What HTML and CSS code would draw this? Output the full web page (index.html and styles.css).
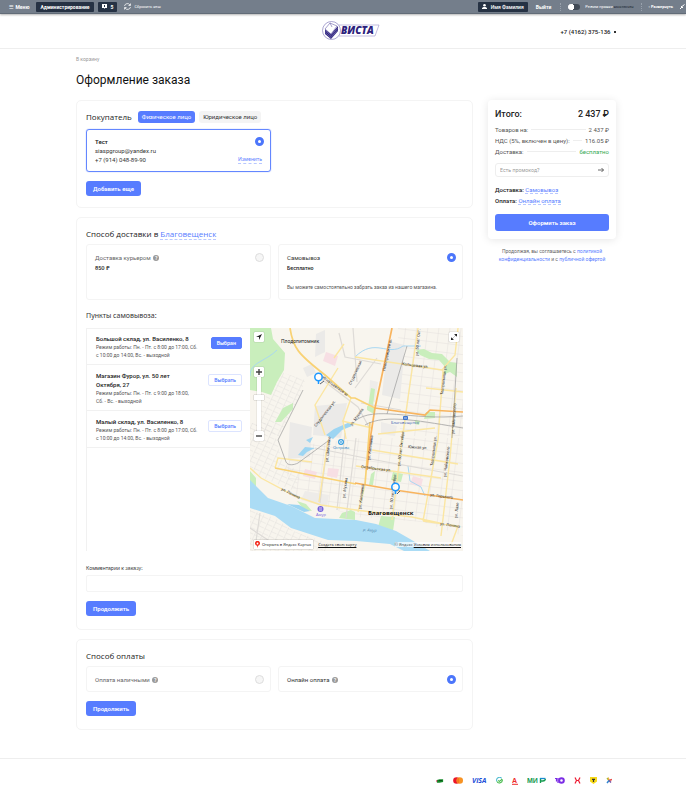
FILE: index.html
```html
<!doctype html>
<html lang="ru">
<head>
    <meta charset="UTF-8" />
    <meta name="viewport" content="width=device-width, initial-scale=1.0" />
    <title>Оформление заказа</title>
    <link rel="stylesheet" href="styles.css">
</head>
<body>
    <div class="admin-bar">
        <button type="button" class="admin-menu">☰&nbsp; Меню</button>
        <button type="button" class="admin-btn">Администрирование</button>
        <button type="button" class="admin-btn admin-count">
            <svg width="5" height="5" viewBox="0 0 5 5"><path d="M0 0h5v4H3L2.500 5 2 4H0z" fill="#fff"/><path d="M2.500 1v2" stroke="#263244"/></svg>
            5
        </button>
        <a href="#" class="admin-reset">
            <svg width="7" height="7" viewBox="0 0 14 14" fill="none" stroke="#fff" stroke-width="1.500"><path d="M1 6a6 6 0 0 1 11-2M13 1v4H9M13 8a6 6 0 0 1-11 2M1 13V9h4"/></svg>
            Сбросить кеш
        </a>
        <button type="button" class="admin-btn admin-user">
            <svg width="5" height="5" viewBox="0 0 5 5" fill="#fff"><circle cx="2.500" cy="1.300" r="1.300"/><path d="M0 5V4l1.500-1h2L5 4v1z"/></svg>
            Имя Фамилия
        </button>
        <a href="#" class="admin-exit">Выйти</a>
        <label class="admin-mode"><input type="checkbox" class="switch"><span>Режим правки <b>выключен</b></span></label>
        <a href="#" class="admin-expand">▫ Развернуть</a>
        <svg class="admin-pin" width="5" height="5" viewBox="0 0 5 5"><path d="M0 5l2-2M1 2l2 2M2 2.500L4.500.500" stroke="#fff" fill="none"/></svg>
    </div>

    <header class="header">
        <a href="#" class="logo" aria-label="Виста">
            <svg width="58" height="20" viewBox="0 0 58 20">
                <path d="M17 4h40l-4 11H17" fill="#fff" stroke="#9a92c9" stroke-width=".6"/>
                <circle cx="9.500" cy="9.500" r="9" fill="#fff" stroke="#8880bd" stroke-width=".7"/>
                <path d="M3 8l6 5 7-8v5l-7 8-6-5z" fill="#2c217c"/>
                <path d="M3 9.500l6 5 7-8M3 11.500l6 5 7-8" stroke="#b8b1df" stroke-width=".4" fill="none"/>
                <path d="M3 8l5-6 7 3-6 8zM8 2l2 4" stroke="#6c62ab" stroke-width=".6" fill="#fff"/>
                <text x="19" y="13" class="logo-text">ВИСТА</text>
            </svg>
        </a>
        <a href="tel:+74162375136" class="phone">+7 (4162) 375-136 <i></i></a>
    </header>

    <main class="container">
        <a href="#" class="back">В корзину</a>
        <h1>Оформление заказа</h1>

        <div class="checkout">
            <form class="steps" id="order">
                <section class="card buyer">
                    <div class="card-head">
                        <h2>Покупатель</h2>
                        <button type="button" class="pill active">Физическое лицо</button>
                        <button type="button" class="pill">Юридическое лицо</button>
                    </div>
                    <div class="tiles">
                        <div class="tile profile selected">
                            <label class="profile-info" for="profile"><b>Тест</b><br>siaspgroup@yandex.ru<br>+7 (914) 048-89-90</label>
                            <div class="profile-side">
                                <input type="radio" name="profile" id="profile" checked>
                                <a href="#" class="link">Изменить</a>
                            </div>
                        </div>
                    </div>
                    <button type="button" class="btn">Добавить еще</button>
                </section>

                <section class="card">
                    <h2>Способ доставки в <a href="#" class="link">Благовещенск</a></h2>
                    <div class="tiles delivery">
                        <label class="tile">
                            <span class="tile-row"><span class="muted">Доставка курьером <i class="help">?</i></span><input type="radio" name="delivery"></span>
                            <b class="price">850 ₽</b>
                        </label>
                        <label class="tile">
                            <span class="tile-row"><span>Самовывоз</span><input type="radio" name="delivery" checked></span>
                            <b class="price">Бесплатно</b>
                            <span class="note">Вы можете самостоятельно забрать заказ из нашего магазина.</span>
                        </label>
                    </div>

                    <h3>Пункты самовывоза:</h3>
                    <div class="pickup">
                        <ul class="points">
                            <li>
                                <div><h4>Большой склад, ул. Василенко, 8</h4><p>Режим работы: Пн. - Пт. с 8:00 до 17:00, Сб.<br>с 10:00 до 14:00, Вс. - выходной</p></div>
                                <button type="button" class="choose chosen">Выбран</button>
                            </li>
                            <li>
                                <div><h4>Магазин Фурор, ул. 50 лет<br>Октября, 27</h4><p>Режим работы: Пн. - Пт. с 9:00 до 18:00,<br>Сб. - Вс. - выходной</p></div>
                                <button type="button" class="choose">Выбрать</button>
                            </li>
                            <li>
                                <div><h4>Малый склад, ул. Василенко, 8</h4><p>Режим работы: Пн. - Пт. с 8:00 до 17:00, Сб.<br>с 10:00 до 14:00, Вс. - выходной</p></div>
                                <button type="button" class="choose">Выбрать</button>
                            </li>
                        </ul>
                        <div class="map">
                            <svg class="map-canvas" viewBox="0 0 213 223" preserveAspectRatio="xMidYMid slice">
                                <defs>
                                    <pattern id="blocks" width="11" height="9" patternUnits="userSpaceOnUse" patternTransform="rotate(7)"><path d="M0 0h11M0 0v9" stroke="#e2dfdc" stroke-width=".9"/></pattern>
                                    <pattern id="lanes" width="7" height="5" patternUnits="userSpaceOnUse" patternTransform="rotate(25)"><path d="M0 0h6M0 0v5" stroke="#dfddda" stroke-width=".8"/></pattern>
                                </defs>
                                <rect width="213" height="223" fill="#f8f5ee"/>
                                <!-- built-up areas -->
                                <path d="M25 42l30 10-6 18-20 38-26-2z" fill="url(#lanes)"/>
                                <path d="M0 95h22l10 38 20 12-8 18-30-13-14-10z" fill="url(#lanes)"/>
                                <path d="M148 0h65v108h-63z" fill="url(#blocks)"/>
                                <path d="M60 116l54-6h99v98l-40-14-68-5-60-22-12-30z" fill="url(#blocks)"/>
                                <path d="M0 182l25 8 18 13 35 12v8H0z" fill="url(#lanes)"/>
                                <path d="M138 13l17 4-5 54-18-4zM66 6l9-4v22l-10 5zM53 40l9-4 4 9-9 4zM65 78l32-3-6 35-28-3zM40 94l22 5-2 30-22 2z" fill="#ebeae8"/>
                                <path d="M55 163l24 4-2 12-26-7zM131 94l16 4-2 10-14-2zM120 52l8 2-3 20-6-2z" fill="#eeece9"/>
                                <path d="M76 24l12 4-3 10-12-5zM55 141l12 3-2 7-12-3zM78 140l11 1-2 9-10-2zM163 148l10 3-2 8-11-3z" fill="#f7dfe4"/>
                                <!-- parks -->
                                <path d="M0 0h21l2 11 12 14-1 17-7 12-6 13-9-3-12-2zM33 80l10-5v6L31 94h-6zM166 22l8-1 8 4 10 1 8 8 7 1v14l-7-5-8 3 4-7-7-8-10-1-9-4zM176 84h9v6l-11 1zM117 78l8 2-1 6-7-4zM121 60l4 1-2 17-5 1zM131 188l14 1-2 14-15-4zM121 146l4-3-2 14h-4zM47 173l9 3 6 7-8-1zM92 185l9-3 4 2v8l-16-2zM0 143l6 7v11l-6-4zM165 92l5 1-1 4-4-1zM143 144l10 2-2 8-10-2z" fill="#c9eebc"/>
                                <!-- water -->
                                <path d="M0 48C0 34 15 34 27 22M105 29c20-20 33 0 48-11h18M158 138l2 15 11 6 4 9" stroke="#a9d8f2" fill="none"/>
                                <path d="M0 152l18 18 23 8 24 12 41 2 20 4 20 7 14 8 20 12h-26l-14-7-34-3-28-1-37-12-16-12-25-8z" fill="#abdcf5"/>
                                <path d="M37 176l12 1 11 6-6 1zM76 107l8-6 16-7 2 4-10 4-9 9zM48 127l7-8 10 1-8 4-4 4zM56 112l7-3-3 6z" fill="#9dd5f2"/>
                                <!-- streets -->
                                <g stroke="#dedbd7" stroke-width="1.200" fill="none">
                                    <path d="M70 50l38 29 12 22M89 5l6 24 36 7M65 120l50 10 98 18M78 112l-8 63M95 105l-8 77M106 110l-10 80M105 60l22-30M111 75l40 7M0 200l30 20M10 185l-5 35M103 0l4 54"/>
                                </g>
                                <g stroke="#fbe6a2" stroke-width="1.400" fill="none">
                                    <path d="M88 40L65 77l10 30M84 30l10-14M101 70l-8 23 3 18M92 93l30 7M105 29l87 13 13-15 3-27M168 0l-16 112-10 80M193 42l-5 70-15 81M206 60l-6 70-9 78M0 140l11 10 34 18 26 9 35 5 56 7 46 10M25 140l3-10 34 4M78 112l-9 62M106 138l85 12M115 157l-7 27M122 122l86 14M176 60l37 4M128 106l57-6M173 193l35 5-7 19"/>
                                </g>
                                <path d="M40 0c3 20 8 26 35 47l26 23 4 0 20 10M25 140l40 8 41 8M120 94l-5 63" stroke="#f9d274" stroke-width="1.700" fill="none"/>
                                <path d="M142 0l-17 80-5 32-3 30M125 80l50 7 5-5 33 2M105 155l40 7 68 10" stroke="#f8b45e" stroke-width="1.700" fill="none"/>
                                <!-- railway -->
                                <path d="M53 62L28 112l8 22c2 4 8 3 12 1l30-22M157 18l-20 68M105 93c20-16 55 0 108-5M115 97c20-12 60-3 98 3M207 30l-5 80" stroke="#9b9b9b" stroke-width=".7" fill="none"/>

                                <g class="street-names">
                                    <text transform="translate(72 50) rotate(36)">Игнатьевское ш.</text>
                                    <text transform="translate(66 99) rotate(-52)">Студенческая ул.</text>
                                    <text transform="translate(101 57) rotate(-65)">Студенческая</text>
                                    <text transform="translate(102 98) rotate(-55)">ул. Мухина</text>
                                    <text transform="translate(135 43) rotate(-78)">Новотроицкое ш.</text>
                                    <text transform="translate(168 28) rotate(-85)">ул. 50 лет Окт.</text>
                                    <text transform="translate(152 37) rotate(7)">Кольцевая ул.</text>
                                    <text transform="translate(193 67) rotate(-83)">Театральная ул.</text>
                                    <text transform="translate(204 106) rotate(-86)">ул. Чайковского</text>
                                    <text transform="translate(78 134) rotate(-84)">ул. Шевченко</text>
                                    <text transform="translate(95 170) rotate(-83)">ул. Мухина</text>
                                    <text transform="translate(120 132) rotate(-83)">ул. Калинина</text>
                                    <text transform="translate(111 181) rotate(-83)">ул. Калинина</text>
                                    <text transform="translate(150 138) rotate(-83)">ул. 50 лет Октября</text>
                                    <text transform="translate(142 181) rotate(-83)">ул. 50 лет Октября</text>
                                    <text transform="translate(183 138) rotate(-83)">Театральная ул.</text>
                                    <text transform="translate(196 149) rotate(-83)">ул. Чайковского</text>
                                    <text transform="translate(207 190) rotate(-83)">ул. Лазо</text>
                                    <text transform="translate(111 140) rotate(7)">Октябрьская ул.</text>
                                    <text transform="translate(158 120) rotate(4)">Южная ул.</text>
                                    <text transform="translate(180 168) rotate(7)">ул. Горького</text>
                                    <text transform="translate(31 162) rotate(26)">ул. Ленина</text>
                                    <text transform="translate(190 197) rotate(8)">ул. Ленина</text>
                                </g>
                                <text x="31" y="14.500" class="place">Плодопитомник</text>
                                <text x="118" y="187" class="city">Благовещенск</text>
                                <text x="141" y="96" class="poi">Благовещенск</text>
                                <rect x="153" y="88" width="5" height="4" rx="1" fill="#3f76ce"/><path d="M154 90h3" stroke="#fff" stroke-width=".7"/>
                                <text x="83" y="121" class="poi water">Острова</text>
                                <circle cx="91" cy="114" r="3" fill="#379fe0"/><circle cx="91" cy="114" r="1.400" fill="none" stroke="#fff" stroke-width=".8"/>
                                <text x="66" y="188" class="poi violet">Амур</text>
                                <circle cx="70.500" cy="181" r="3" fill="#7662dc"/><path d="M69 180h3M69 182h3" stroke="#fff" stroke-width=".7"/>
                                <text x="113" y="203" class="river" transform="rotate(4 113 203)">р. Амур</text>
                                <g fill="#fff" fill-opacity=".9" stroke="#1e98ff" stroke-width="1.500">
                                    <path d="M68.500 56v-3M145.500 166v-3.500"/><circle cx="68.500" cy="49" r="3.700"/><circle cx="145.500" cy="159" r="3.700"/>
                                </g>
                                <path d="M70 56l4-3M147 166l3-3" stroke="#56606d"/>
                            </svg>
                            <button type="button" class="map-btn locate" aria-label="Моё местоположение"><svg width="6" height="6" viewBox="0 0 6 6"><path d="M0 3l6-3-3 6V3z" fill="#222"/></svg></button>
                            <button type="button" class="map-btn full" aria-label="На весь экран"><svg width="6" height="6" viewBox="0 0 6 6"><path d="M3.500 0H6v2.500zM0 3.500V6h2.500zM1 5l1.500-1.500M5 1L3.500 2.500" fill="#222" stroke="#222" stroke-width=".5"/></svg></button>
                            <div class="zoom">
                                <button type="button" class="map-btn" aria-label="Приблизить"><svg width="6" height="6" viewBox="0 0 6 6"><path d="M0 3h6M3 0v6" stroke="#444" stroke-width="1.400"/></svg></button>
                                <span class="zoom-track"><i></i></span>
                                <button type="button" class="map-btn" aria-label="Отдалить"><svg width="6" height="6" viewBox="0 0 6 6"><path d="M0 3h6" stroke="#444" stroke-width="1.400"/></svg></button>
                            </div>
                            <div class="map-foot">
                                <a href="#" class="open-map"><svg width="5" height="7" viewBox="0 0 5 7"><path d="M2.500 7L2 4.800A2.500 2.500 0 1 1 3 4.800z" fill="#f32a1b"/><circle cx="2.500" cy="2.500" r=".9" fill="#fff"/></svg>Открыть в Яндекс Картах</a>
                                <a href="#" class="own-map">Создать свою карту</a>
                                <span class="terms">© Яндекс <a href="#">Условия использования</a></span>
                            </div>
                        </div>
                    </div>

                    <label class="comment-label" for="comment">Комментарии к заказу:</label>
                    <input type="text" class="comment" id="comment">
                    <button type="button" class="btn">Продолжить</button>
                </section>

                <section class="card">
                    <h2>Способ оплаты</h2>
                    <div class="tiles">
                        <label class="tile">
                            <span class="tile-row"><span class="muted">Оплата наличными <i class="help">?</i></span><input type="radio" name="payment"></span>
                        </label>
                        <label class="tile">
                            <span class="tile-row"><span>Онлайн оплата <i class="help">?</i></span><input type="radio" name="payment" checked></span>
                        </label>
                    </div>
                    <button type="button" class="btn">Продолжить</button>
                </section>
            </form>

            <aside class="sidebar">
                <div class="summary">
                    <div class="total"><span>Итого:</span><span>2 437 ₽</span></div>
                    <div class="sum-row"><span>Товаров на:</span><i></i><span>2 437 ₽</span></div>
                    <div class="sum-row"><span>НДС (5%, включен в цену):</span><i></i><span>116.05 ₽</span></div>
                    <div class="sum-row"><span>Доставка:</span><i></i><span class="free">бесплатно</span></div>
                    <div class="promo">
                        <input type="text" placeholder="Есть промокод?" aria-label="Промокод">
                        <button type="button" aria-label="Применить"><svg width="6" height="6" viewBox="0 0 6 6"><path d="M0 3h5.500M3.500 1l2 2-2 2" fill="none" stroke="#444" stroke-width=".8"/></svg></button>
                    </div>
                    <p class="choice">Доставка: <a href="#" class="link">Самовывоз</a></p>
                    <p class="choice">Оплата: <a href="#" class="link">Онлайн оплата</a></p>
                    <button type="submit" form="order" class="btn submit">Оформить заказ</button>
                </div>
                <p class="agree">Продолжая, вы соглашаетесь с <a href="#">политикой конфиденциальности</a> и с <a href="#">публичной офертой</a></p>
            </aside>
        </div>
    </main>

    <footer class="footer">
        <svg width="8" height="6" viewBox="0 0 9 6"><path d="M1 2l3-1 4 0 0 3-4 1-3 0z" fill="#168a2b"/><path d="M3 2.500h4" stroke="#064e12"/><path d="M0 3h1.500" stroke="#e04"/></svg>
        <svg width="10" height="7" viewBox="0 0 10 7"><circle cx="3.500" cy="3.500" r="3.300" fill="#eb1528"/><circle cx="6.700" cy="3.500" r="3.300" fill="#f79324"/><path d="M5.100 1v5" stroke="#f75f1c"/></svg>
        <svg width="15" height="7" viewBox="0 0 15 7"><text x="0" y="6" class="visa">VISA</text></svg>
        <svg width="7" height="7" viewBox="0 0 8 8" fill="none"><path d="M6.500 1.500A3.300 3.300 0 0 0 1 5" stroke="#4cbbcf" stroke-width="1.200"/><path d="M1 5a3.300 3.300 0 0 0 6.200-2M2.500 4L4 5l3-2.500" stroke="#41b847" stroke-width="1.200"/></svg>
        <svg width="6" height="8" viewBox="0 0 6 8"><text x="0" y="5.500" class="alfa">А</text><path d="M0 7.300h6" stroke="#ee2b2b"/></svg>
        <svg width="19" height="7" viewBox="0 0 19 7"><text x="0" y="6" class="mir">МИ</text><path d="M13.500 1v5M13.500 4H16q2 0 2.500-2" stroke="#169b50" stroke-width="1.400" fill="none"/><path d="M13 1.500h5.500" stroke="#198ccd" stroke-width="1.300"/></svg>
        <svg width="10" height="7" viewBox="0 0 10 7"><circle cx="6.500" cy="3.500" r="2.300" fill="none" stroke="#7b2ce5" stroke-width="2"/><path d="M0 1.500h1.500v3M3 1v5" stroke="#7b2ce5" stroke-width="1.200" fill="none"/></svg>
        <svg width="7" height="7" viewBox="0 0 7 7"><path d="M1 .500l1.500 3L1 6.500M6 .500l-1.500 3L6 6.500M2 3.500h3" stroke="#ed1c33" stroke-width="1.200" fill="none"/></svg>
        <svg width="7" height="7" viewBox="0 0 7 7"><path d="M0 0h7v4.500L3.500 7 0 4.500z" fill="#f7d918"/><path d="M2 2.300h3M3.500 2.500V5" stroke="#333" stroke-width="1.200"/></svg>
        <svg width="6" height="7" viewBox="0 0 6 7"><path d="M3 3.500L1 1" stroke="#a4b934" stroke-width="1.300"/><path d="M3 3.500L2.500.500" stroke="#f2a32c"/><path d="M3 3.500l3-1" stroke="#e64a46" stroke-width="1.500"/><path d="M3 3.500l2 2" stroke="#7951a2" stroke-width="1.500"/><path d="M3 3.500L1 6" stroke="#3184d0" stroke-width="1.500"/></svg>
    </footer>
</body>
</html>
```
FILE: styles.css
```css
* {
    box-sizing: border-box;
    margin: 0;
    padding: 0;
}

body {
    font-family: Roboto, Inter, sans-serif;
    font-size: 6px;
    line-height: 9px;
    color: #333;
    background: #fff;
}

svg {
    display: block;
    flex: none;
}

a {
    color: #577cff;
    text-decoration: none;
}

button {
    font-family: inherit;
    font-size: 6px;
    line-height: 8px;
    border: none;
    cursor: pointer;
}

.admin-bar {
    display: flex;
    align-items: center;
    height: 14px;
    padding: 0 1px 0 9px;
    font-size: 5px;
    line-height: 8px;
    color: #fff;
    background: #747e8b;
    border-bottom: 1px solid #626c78;
    box-shadow: 0 1px 2px rgba(0, 0, 0, 0.3);
    white-space: nowrap;
}

.admin-bar a,
.admin-bar button {
    font-size: 5px;
    color: #fff;
}

.admin-menu {
    background: none;
    font-weight: bold;
    margin-right: 7px;
}

.admin-btn {
    display: flex;
    align-items: center;
    gap: 4px;
    height: 10px;
    padding: 0 4px;
    border-radius: 1px;
    background: #263244;
    font-weight: bold;
}

.admin-bar .admin-user,
.admin-bar .admin-exit,
.admin-bar .admin-expand {
    font-size: 4px;
    font-weight: bold;
}

.admin-bar .admin-user {
    margin-left: auto;
    font-size: 5px;
    font-weight: 500;
}

.admin-count {
    margin: 0 7px 0 4px;
}

.admin-bar .admin-reset {
    display: flex;
    align-items: center;
    gap: 3px;
    font-size: 4px;
}

.admin-bar .admin-exit {
    margin: 0 9px 0 8px;
    font-size: 5px;
}

.admin-mode {
    display: flex;
    align-items: center;
    gap: 5px;
    padding: 0 7px;
    font-size: 4px;
    border-left: 1px dotted #98a1ac;
    border-right: 1px dotted #98a1ac;
}

.admin-mode b {
    font-weight: 500;
    color: #333c48;
}

.switch {
    appearance: none;
    width: 12px;
    height: 6px;
    border-radius: 3px;
    background: radial-gradient(circle at 3px 3px, #fff 3px, #414a56 3px);
}

.admin-bar .admin-expand {
    margin: 0 7px;
}

.header {
    display: grid;
    grid-template-columns: 1fr auto 1fr;
    align-items: center;
    height: 35px;
    padding: 0 70px 0 86px;
    border-bottom: 1px solid #eee;
}

.logo {
    grid-column: 2;
}

.logo-text {
    font: italic 800 10px "Open Sans", sans-serif;
    fill: #2c217c;
}

.phone {
    justify-self: end;
    color: #222;
    font-weight: 500;
}

.phone i {
    display: inline-block;
    width: 2px;
    height: 2px;
    margin: 0 0 1px 2px;
    background: #333;
}

.container {
    padding: 6px 70px 0 76px;
}

.back {
    display: block;
    font-size: 5px;
    color: #999;
}

h1 {
    margin: 6px 0 10px;
    font-size: 12px;
    line-height: 20px;
    font-weight: 400;
    color: #111;
}

.checkout {
    display: grid;
    grid-template-columns: minmax(0, 1fr) 128px;
    gap: 15px;
    align-items: start;
}

.steps {
    display: flex;
    flex-direction: column;
    gap: 9px;
}

.card {
    padding: 10px 9px 13px;
    border: 1px solid #f4f4f4;
    border-radius: 5px;
}

.buyer {
    padding-bottom: 11px;
}

.card-head {
    display: flex;
    align-items: center;
    gap: 4px;
}

h2,
h3 {
    font-family: "Open Sans", sans-serif;
    font-size: 8px;
    line-height: 12px;
    font-weight: 400;
    color: #222;
}

h3 {
    margin: 10px 0 6px;
    font-family: "Noto Sans", sans-serif;
    font-size: 7px;
    color: #333;
}

.card-head h2 {
    margin-right: 2px;
}

.pill {
    height: 12px;
    padding: 0 4px;
    border-radius: 3px;
    background: #f4f4f4;
    color: #333;
}

.pill.active {
    background: #577cff;
    color: #fff;
}

.tiles {
    display: grid;
    grid-template-columns: 1fr 1fr;
    gap: 7px;
    margin: 6px 0 9px;
}

.card > h2 + .tiles {
    margin: 4px 0 9px;
}

.tile {
    display: block;
    padding: 7px 6px 7px 8px;
    border: 1px solid #f4f4f4;
    border-radius: 3px;
}

.tile-row {
    display: flex;
    justify-content: space-between;
    align-items: center;
    height: 10px;
}

.profile {
    display: flex;
    justify-content: space-between;
}

.tile.selected {
    border-color: #6487ff;
    box-shadow: 0 0 1px #6487ff;
}

.tile b {
    font-weight: 600;
    color: #222;
}

.profile-side {
    display: flex;
    flex-direction: column;
    align-items: flex-end;
    justify-content: space-between;
}

.profile-side .link {
    font: 5px/7px Inter, sans-serif;
    margin-right: 2px;
}

.link {
    border-bottom: 1px dashed #b9c8ff;
}

input[type="radio"] {
    appearance: none;
    width: 9px;
    height: 9px;
    border: 1px solid #ddd;
    border-radius: 50%;
    background: #f6f6f6;
}

input[type="radio"]:checked {
    border: 3px solid #4c76fb;
    background: #fff;
}

.delivery .tile {
    min-height: 56px;
}

.muted {
    color: #666;
}

.help {
    display: inline-block;
    width: 6px;
    height: 6px;
    margin-left: 1px;
    border-radius: 50%;
    background: #999;
    color: #fff;
    font-size: 5px;
    line-height: 6px;
    font-style: normal;
    font-weight: 600;
    text-align: center;
}

.price {
    display: block;
    margin-top: 2px;
    font-family: Inter, sans-serif;
    font-size: 5px;
}

.note {
    display: block;
    margin-top: 10px;
    font-size: 5px;
    color: #555;
}

.pickup {
    display: grid;
    grid-template-columns: 163px minmax(0, 1fr);
    border-left: 1px solid #f1f1f1;
}

.points {
    list-style: none;
    border-top: 1px solid #f1f1f1;
}

.points li {
    display: flex;
    justify-content: space-between;
    gap: 4px;
    padding: 5px 8px 5px 9px;
    border-bottom: 1px solid #f1f1f1;
    white-space: nowrap;
}

.points li + li {
    padding-top: 6px;
}

.points h4 {
    font-size: 6px;
    line-height: 9px;
    font-weight: 500;
    color: #222;
}

.points p {
    font-size: 5px;
    line-height: 8px;
    color: #555;
}

.choose {
    flex: none;
    align-self: flex-start;
    height: 12px;
    margin-top: 3px;
    padding: 0 5px;
    border: 1px solid #dce4ff;
    border-radius: 2px;
    background: #fff;
    color: #577cff;
    font-family: Inter, sans-serif;
    font-size: 5px;
    font-weight: 600;
}

.chosen {
    background: #577cff;
    border-color: #577cff;
    color: #fff;
}

.map {
    position: relative;
    height: 223px;
    overflow: hidden;
}

.map-canvas {
    width: 100%;
    height: 100%;
}

.street-names {
    font: 4px Roboto, sans-serif;
    fill: #333;
}

.place {
    font: 5px Roboto, sans-serif;
    fill: #222;
}

.city {
    font: 700 6px "Open Sans", sans-serif;
    fill: #111;
}

.poi {
    font: 4px "Open Sans", sans-serif;
    fill: #3157ae;
}

.water {
    fill: #2786c8;
}

.violet {
    fill: #7662dc;
}

.river {
    font: italic 4px "Open Sans", sans-serif;
    fill: #4c82aa;
}

.map-btn {
    display: flex;
    align-items: center;
    justify-content: center;
    width: 10px;
    height: 10px;
    border-radius: 1px;
    background: #fff;
    box-shadow: 0 0 1px rgba(0, 0, 0, 0.5);
}

.locate {
    position: absolute;
    left: 4px;
    top: 4px;
}

.full {
    position: absolute;
    right: 4px;
    top: 4px;
}

.zoom {
    position: absolute;
    left: 4px;
    top: 39px;
}

.zoom-track {
    display: block;
    width: 4px;
    height: 54px;
    margin: 0 auto;
    padding-top: 18px;
    background: #fff;
    box-shadow: 0 0 1px rgba(0, 0, 0, 0.5);
}

.zoom-track i {
    display: block;
    width: 10px;
    height: 5px;
    margin-left: -3px;
    background: #fff;
    box-shadow: 0 0 1px rgba(0, 0, 0, 0.5);
}

.map-foot {
    position: absolute;
    left: 4px;
    right: 2px;
    bottom: 2px;
    display: flex;
    align-items: center;
    font: 4px/9px "Open Sans", sans-serif;
    white-space: nowrap;
}

.map-foot a {
    color: #111;
    text-decoration: underline;
}

.map-foot .open-map {
    display: flex;
    align-items: center;
    gap: 2px;
    padding: 0 2px 0 1px;
    background: #fff;
    text-decoration: none;
    box-shadow: 0 0 1px rgba(0, 0, 0, 0.5);
}

.own-map {
    margin-left: 5px;
}

.terms {
    margin-left: auto;
    line-height: 5px;
    background: rgba(255, 255, 255, 0.7);
}

.comment-label {
    display: block;
    margin-top: 13px;
    font-family: Inter, sans-serif;
    font-size: 5px;
}

.comment {
    display: block;
    width: 100%;
    height: 17px;
    margin: 2px 0 9px;
    padding: 0 6px;
    border: 1px solid #f4f4f4;
    border-radius: 2px;
    font: inherit;
}

.btn {
    height: 15px;
    padding: 0 7px;
    border-radius: 3px;
    background: #577cff;
    color: #fff;
    font-weight: 600;
}

.summary {
    padding: 8px 7px;
    border-radius: 4px;
    box-shadow: 0 1px 8px rgba(0, 0, 0, 0.1);
}

.total {
    display: flex;
    justify-content: space-between;
    margin-bottom: 3px;
    font-size: 9px;
    line-height: 13px;
    font-weight: 500;
    color: #222;
}

.sum-row {
    display: flex;
    align-items: center;
    gap: 3px;
    line-height: 11px;
    color: #555;
}

.sum-row i {
    flex: 1;
    height: 1px;
    background: #eee;
}

.free {
    color: #35a955;
}

.promo {
    display: flex;
    align-items: center;
    height: 14px;
    margin: 6px 0 7px;
    padding: 0 4px;
    border: 1px solid #eee;
    border-radius: 3px;
}

.promo input {
    flex: 1;
    min-width: 0;
    border: none;
    font: 5px/9px Inter, sans-serif;
}

.promo input::placeholder {
    color: #999;
}

.promo button {
    background: none;
}

.choice {
    line-height: 11px;
    font-weight: 500;
    color: #222;
}

.choice .link {
    font-weight: 400;
}

.submit {
    width: 100%;
    height: 17px;
    margin-top: 8px;
}

.agree {
    padding: 8px 10px;
    font-size: 5px;
    line-height: 8px;
    text-align: center;
    color: #666;
}

.footer {
    display: flex;
    justify-content: flex-end;
    align-items: center;
    gap: 9px;
    height: 42px;
    margin-top: 28px;
    padding: 2px 74px 0 76px;
    border-top: 1px solid #eee;
}

.visa {
    font: italic bold 7px "Open Sans", sans-serif;
    fill: #2351d9;
}

.alfa {
    font: bold 7px "Liberation Sans", sans-serif;
    fill: #ee2b2b;
}

.mir {
    font: bold 7px "Liberation Sans", sans-serif;
    fill: #169b50;
}
```
